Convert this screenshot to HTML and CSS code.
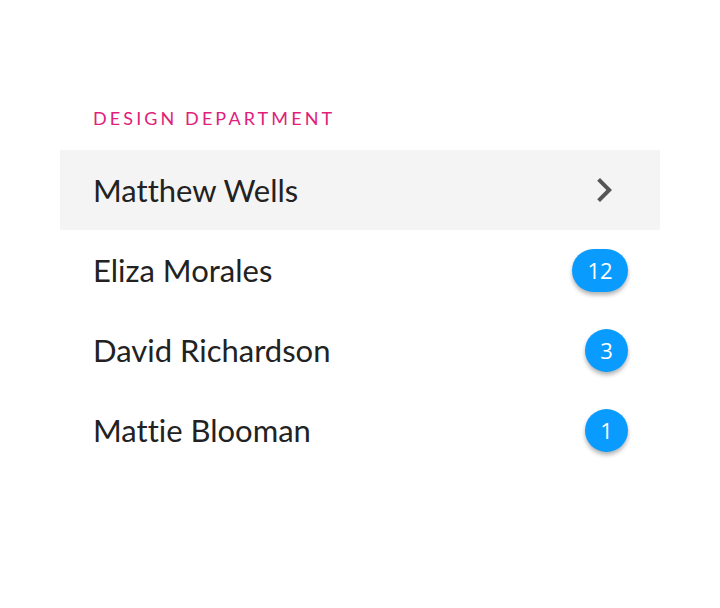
FILE: index.html
```html
<!DOCTYPE html>
<html>
<head>
<meta charset="utf-8">
<link rel="stylesheet" href="styles.css">
</head>
<body>
<div class="panel">
  <h2 class="title">DESIGN DEPARTMENT</h2>
  <ul class="list">
    <li class="row active">
      <span class="name">Matthew Wells</span>
      <svg class="chev" width="48" height="48" viewBox="0 0 24 24"><path d="M8.6 16.6 13.2 12 8.6 7.4 10 6l6 6-6 6z" fill="#555"/></svg>
    </li>
    <li class="row">
      <span class="name">Eliza Morales</span>
      <span class="badge wide">12</span>
    </li>
    <li class="row">
      <span class="name">David Richardson</span>
      <span class="badge">3</span>
    </li>
    <li class="row">
      <span class="name">Mattie Blooman</span>
      <span class="badge">1</span>
    </li>
  </ul>
</div>
</body>
</html>
```
FILE: styles.css
```css
html, body {
  margin: 0;
  padding: 0;
  background: #fff;
}
body {
  font-family: Lato, "Open Sans", sans-serif;
  font-variant-ligatures: none;
}
.panel {
  width: 600px;
  margin: 0 60px;
  padding-top: 106px;
}
.title {
  margin: 0 0 20px 33px;
  font-size: 18px;
  font-weight: 400;
  letter-spacing: 3.1px;
  color: #e0207a;
  line-height: 24px;
}
.list {
  list-style: none;
  margin: 0;
  padding: 0;
}
.row {
  height: 80px;
  display: flex;
  align-items: center;
  justify-content: space-between;
  padding: 0 32px 0 33px;
  box-sizing: border-box;
}
.row.active {
  background: #f4f4f4;
}
.name {
  font-size: 31px;
  color: #222;
}
.chev {
  width: 48px;
  height: 48px;
  margin-right: 0;
}
.badge {
  min-width: 43px;
  height: 43px;
  border-radius: 22px;
  background: #0a9bff;
  color: #fff;
  font-family: "Open Sans", sans-serif;
  font-size: 22px;
  display: flex;
  align-items: center;
  justify-content: center;
  box-shadow: 0 3px 4px rgba(0,0,0,0.3);
  box-sizing: border-box;
}
.badge.wide {
  min-width: 56px;
  padding: 0 14px;
}
```
